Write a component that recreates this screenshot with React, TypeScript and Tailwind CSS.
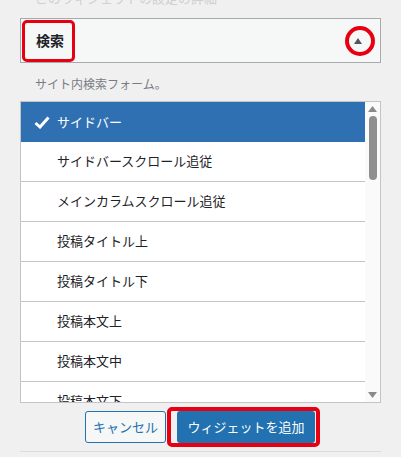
import React from 'react';

const areas = [
  'サイドバー',
  'サイドバースクロール追従',
  'メインカラムスクロール追従',
  '投稿タイトル上',
  '投稿タイトル下',
  '投稿本文上',
  '投稿本文中',
  '投稿本文下',
];

const font = { fontFamily: '"Noto Sans CJK JP", "Noto Sans", sans-serif' };

export default function App() {
  return (
    <div
      className="w-[401px] h-[457px] overflow-hidden bg-[#f0f0f1] px-[20px] text-[#1d2327]"
      style={font}
    >
      {/* cut-off heading above */}
      <div className="h-[7px] overflow-hidden">
        <p className="-mt-[10px] pl-[15px] text-[13px] leading-[16px] text-[#cfd0d2]">
          このウィジェットの設定の詳細
        </p>
      </div>

      {/* widget header */}
      <div className="relative mt-[11px] flex h-[45px] items-center justify-between border border-[#a7aaad] bg-[#f6f7f7] pl-[15px] pr-[12px]">
        <span className="text-[14px] font-bold">検索</span>
        <span className="flex h-[20px] w-[20px] items-center justify-center">
          <svg width="8" height="6" viewBox="0 0 8 6">
            <path d="M4 0 L8 6 L0 6 Z" fill="#50575e" />
          </svg>
        </span>
        <div className="absolute left-[1px] top-[1px] h-[42px] w-[53px] rounded-[5px] border-[3px] border-[#e60012]" />
        <div className="absolute right-[5px] top-[7px] h-[30px] w-[30px] rounded-full border-[4px] border-[#e60012]" />
      </div>

      <p className="mt-[12px] pl-[15px] text-[12px] leading-[18px] text-[#787c82]">
        サイト内検索フォーム。
      </p>

      {/* area list */}
      <div className="mt-[8px] flex h-[302px] border border-[#c3c4c7] bg-white">
        <div className="flex-1 overflow-hidden">
          {areas.map((a, i) => (
            <div
              key={a}
              className={`flex h-[40px] shrink-0 items-center text-[13px] ${
                i === 0
                  ? 'bg-[#2f70b3] text-white'
                  : 'border-b border-[#c3c4c7] pl-[36px]'
              }`}
            >
              {i === 0 && (
                <svg className="ml-[13px] mr-[7px]" width="16" height="13" viewBox="0 0 16 13">
                  <path d="M1.5 7 L6 11 L14.5 1.5" stroke="white" strokeWidth="3" fill="none" />
                </svg>
              )}
              <span className="-mt-[1px]">{a}</span>
            </div>
          ))}
        </div>
        <div className="flex w-[15px] flex-col items-center bg-[#fafafa] py-[4px]">
          <svg width="9" height="6" viewBox="0 0 9 6">
            <path d="M4.5 0 L9 6 L0 6 Z" fill="#8a8a8a" />
          </svg>
          <div className="mt-[4px] h-[64px] w-[8px] rounded-full bg-[#8f8f8f]" />
          <div className="flex-1" />
          <svg width="9" height="6" viewBox="0 0 9 6">
            <path d="M0 0 L9 0 L4.5 6 Z" fill="#8a8a8a" />
          </svg>
        </div>
      </div>

      {/* actions */}
      <div className="mt-[8px] flex items-center pl-[65px]">
        <button className="h-[32px] w-[81px] rounded-[3px] border border-[#2271b1] bg-[#f6f7f7] text-[13px] text-[#2271b1]">
          キャンセル
        </button>
        <div className="relative ml-[11px]">
          <button className="h-[32px] w-[138px] rounded-[3px] bg-[#2271b1] text-[13px] text-white">
            ウィジェットを追加
          </button>
          <div className="absolute -left-[10px] -right-[5px] -top-[4px] -bottom-[4px] rounded-[5px] border-[4px] border-[#e60012]" />
        </div>
      </div>

      <div className="mt-[8px] border-t border-[#dcdcde]" />
    </div>
  );
}
